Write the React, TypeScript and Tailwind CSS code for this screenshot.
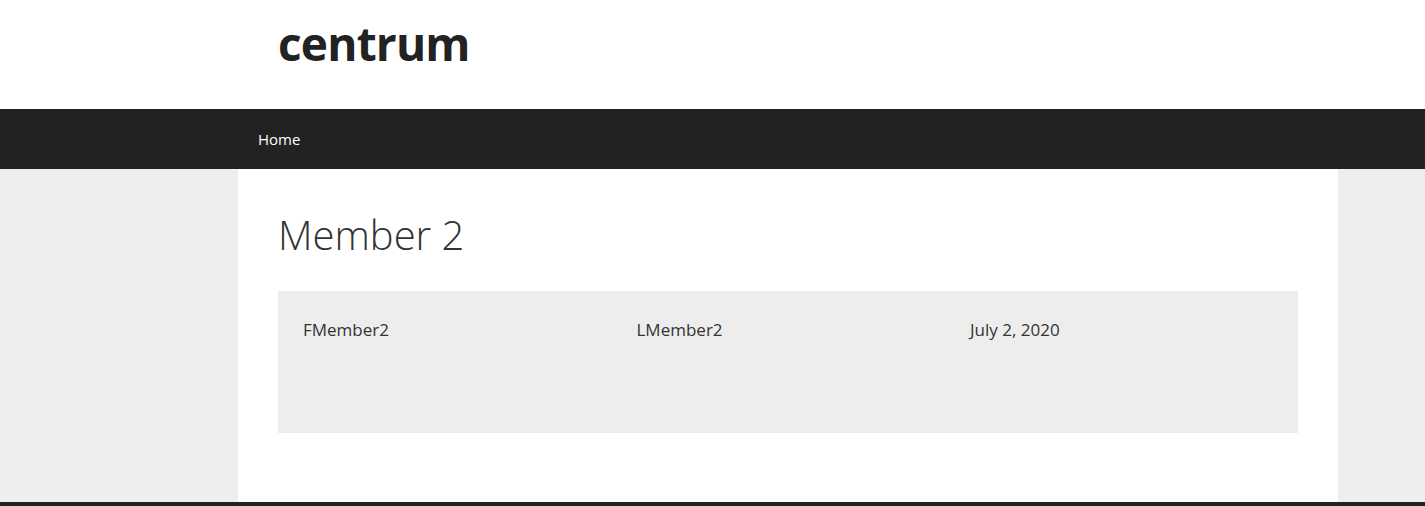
export default function App() {
  const font = { fontFamily: '"Open Sans", "Noto Sans", sans-serif' };
  return (
    <div style={font} className="bg-[#eeeeee] text-[#333333]">
      <header className="bg-white h-[109px]">
        <div className="w-[1100px] ml-[238px] px-[40px] pt-[13px]">
          <div className="text-[46px] font-bold leading-[60px] text-[#222222] tracking-[-0.8px]">centrum</div>
        </div>
      </header>
      <nav className="bg-[#222222] h-[60px]">
        <div className="w-[1100px] ml-[238px] px-[20px] flex items-center h-full">
          <span className="text-white text-[15px] font-medium">Home</span>
        </div>
      </nav>
      <main className="w-[1100px] ml-[238px] bg-white px-[40px] pt-[40px] h-[333px]">
        <h1 className="text-[40px] font-light leading-[52px] text-[#333333]">Member 2</h1>
        <div className="mt-[30px] bg-[#ededed] h-[142px] pl-[25px] pt-[26px] grid grid-cols-[repeat(3,333.5px)] items-start">
          <div className="text-[17px] leading-[26px]">FMember2</div>
          <div className="text-[17px] leading-[26px]">LMember2</div>
          <div className="text-[17px] leading-[26px]">July 2, 2020</div>
        </div>
      </main>
      <footer className="bg-[#222222] h-[4px]"></footer>
    </div>
  );
}
